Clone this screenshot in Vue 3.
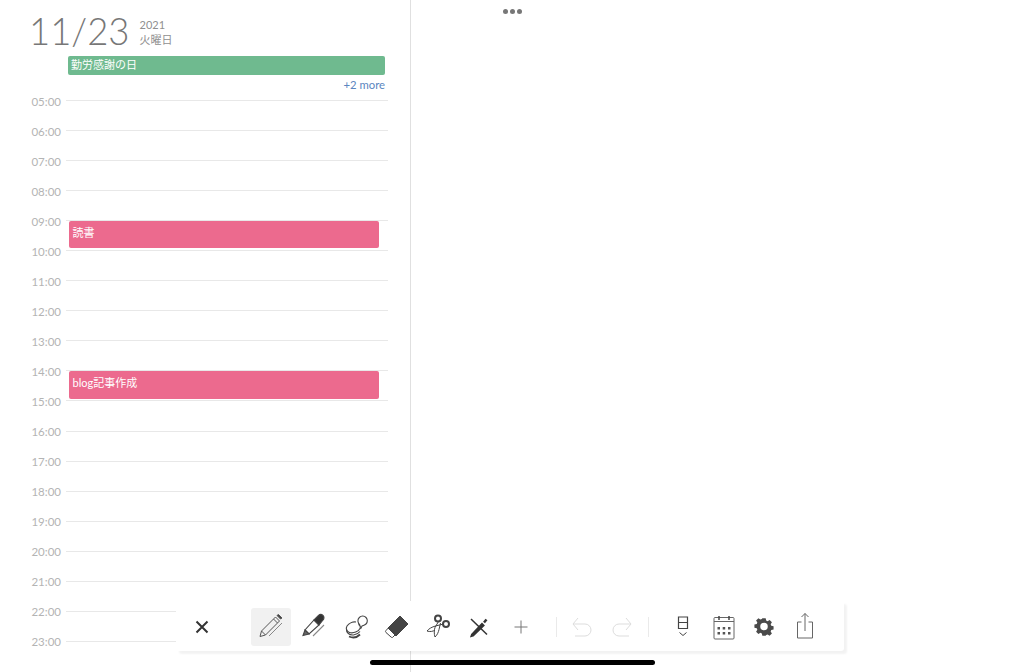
<template>
<div class="page">
  <section class="day-panel">
    <header class="day-head">
      <span class="day-date">11/23</span>
      <div class="day-meta">
        <span>2021</span>
        <span>火曜日</span>
      </div>
    </header>
    <div class="holiday">勤労感謝の日</div>
    <a class="more">+2 more</a>
    <div class="timeline">
      <div v-for="hour in hours" :key="hour" class="hour-row">
        <span class="hour-label">{{ hour }}</span>
        <span class="hour-line"></span>
      </div>
      <div
        v-for="ev in events"
        :key="ev.title"
        class="event"
        :style="{ top: ev.top + 'px', height: ev.height + 'px' }"
      >{{ ev.title }}</div>
    </div>
  </section>

  <div class="dots"><i></i><i></i><i></i></div>

  <div class="toolbar">
    <button class="tool close">
      <svg width="24" height="24" viewBox="0 0 24 24"><path d="M6.500 6.500l11 11M17.500 6.500l-11 11" stroke="#333" stroke-width="2" fill="none"/></svg>
    </button>
    <div class="tool-group pens">
      <button class="tool active">
        <svg width="30" height="30" viewBox="0 0 30 30" fill="none" stroke="#555" stroke-width="1"><path d="M4 24.500l1.500-5.500L19.500 5l4 4L9.500 23z"/><path d="M5.500 19l4 4M17.500 7l4 4"/><path d="M21 3.500l3.500 3.500 1.500-1-3.500-3.500z" fill="#444"/><path d="M13 24L26 11" stroke="#888"/></svg>
      </button>
      <button class="tool">
        <svg width="30" height="30" viewBox="0 0 30 30" fill="none" stroke="#444" stroke-width="1.100"><g transform="translate(1 0)"><path d="M15 8l5 5-10 9-4-4z"/><path d="M15 8l4.500-4.500c1.300-1.300 3.200-1.200 4.500 0s1.300 3.200 0 4.500L20 13z" fill="#333"/><path d="M6 18l-2 5.500L10 22z" fill="#666"/><path d="M14 24L25 13" stroke="#888"/></g></svg>
      </button>
      <button class="tool">
        <svg width="30" height="30" viewBox="0 0 30 30" fill="none" stroke="#444" stroke-width="1.100"><g transform="translate(3 0)"><path d="M18 13c-2.500-2-2.800-5.500-.7-7.500 2-2 5-1.800 6.700 0s1.800 4.800 0 6.500c-1.500 1.400-3 1.300-4 2l-1.500 3"/><path d="M14 10c-3-.5-7 1-9 4-1.500 2.500-.5 5.500 2.500 6.500 4 1.300 9-1 10.500-4 1-2-.5-3.500-1.500-4"/><path d="M4.500 17c-.5 3.500 3 6.500 7 6 2.500-.3 5-1.500 6.500-3.500"/><path d="M7 24.500c3.500 1.500 8 1 11-2" stroke-width="1.800"/></g></svg>
      </button>
      <button class="tool">
        <svg width="30" height="30" viewBox="0 0 30 30" fill="none" stroke="#444" stroke-width="1"><g transform="translate(1 0)"><path d="M18 4l8 8-12 12-8-8z" fill="#444"/><path d="M9 13l-5 5.500c-.7.800-.7 1.500 0 2l5 4.500c.8.700 1.500.7 2 0l4-4"/></g></svg>
      </button>
      <button class="tool">
        <svg width="30" height="30" viewBox="0 0 30 30" fill="none" stroke="#444" stroke-width="1"><circle cx="15" cy="6.500" r="3" stroke-width="2"/><circle cx="23" cy="12" r="3" stroke-width="2"/><path d="M15.500 9.500L12 15.500c-1 2.500-1 6.500 0 9.500 2-1.500 3.500-5 4-7.500L17.500 11"/><path d="M20.500 12l-8 2C9 15 6 16.500 4 19c3 1 6 .5 8-1"/></svg>
      </button>
      <button class="tool">
        <svg width="30" height="30" viewBox="0 0 30 30" fill="none" stroke="#333" stroke-width="1.500"><path d="M7 7l16 15.500"/><path d="M9 23.500l-1.500.5.500-1.500L18 12l1.500 1.500z" fill="#333" stroke-width="2"/><path d="M20 10.500l2.500-3" stroke-width="2.500"/></svg>
      </button>
      <button class="tool">
        <svg width="24" height="24" viewBox="0 0 24 24"><path d="M12 5.500v13M5.500 12h13" stroke="#777" stroke-width="1" fill="none"/></svg>
      </button>
    </div>
    <span class="sep first"></span>
    <button class="tool narrow">
      <svg width="24" height="24" viewBox="0 0 24 24" fill="none" stroke="#ddd" stroke-width="1"><path d="M7 3L2 9l5 6M2 9h12a6 6 0 0 1 0 12H4"/></svg>
    </button>
    <button class="tool narrow">
      <svg width="24" height="24" viewBox="0 0 24 24" fill="none" stroke="#ddd" stroke-width="1"><path d="M17 3l5 6-5 6M22 9H10a6 6 0 0 0 0 12h10"/></svg>
    </button>
    <span class="sep second"></span>
    <div class="tool-group right">
      <button class="tool">
        <svg width="24" height="30" viewBox="0 0 24 30" fill="none" stroke="#444" stroke-width="1.200"><path d="M7.500 5h9v11.500h-9zM7.500 10.500h9"/><path d="M8.500 20.500l3.500 3 3.500-3" stroke-width="1"/></svg>
      </button>
      <button class="tool">
        <svg width="26" height="30" viewBox="0 0 26 30" fill="none" stroke="#666" stroke-width="1"><rect x="3" y="5.500" width="20" height="21.500" rx="1"/><path d="M3 9.500h20" /><path d="M8 4v4M18 4v4" stroke="#444" stroke-width="1.500"/><g fill="#555" stroke="none"><rect x="6.500" y="15" width="2.500" height="2.500"/><rect x="11.700" y="15" width="2.500" height="2.500"/><rect x="17" y="15" width="2.500" height="2.500"/><rect x="6.500" y="20" width="2.500" height="2.500"/><rect x="11.700" y="20" width="2.500" height="2.500"/><rect x="17" y="20" width="2.500" height="2.500"/></g></svg>
      </button>
      <button class="tool">
        <svg width="20" height="20" viewBox="0 0 24 24"><path fill="#4a4a4a" fill-rule="evenodd" d="M10 2h4l.6 2.800 1.700.7L18.700 4l2.800 2.800-1.500 2.400.7 1.700 2.800.6v4l-2.800.6-.7 1.700 1.500 2.400-2.800 2.800-2.400-1.500-1.700.7L14 23h-4l-.6-2.800-1.700-.7L5.300 21l-2.800-2.800L4 15.800l-.7-1.700L.5 13.500v-4l2.800-.6.700-1.700L2.500 4.800 5.300 2l2.400 1.500 1.700-.7zM12 7.500a4.500 4.500 0 1 0 0 9 4.500 4.500 0 0 0 0-9z" transform="translate(0 -.5)"/></svg>
      </button>
      <button class="tool">
        <svg width="26" height="30" viewBox="0 0 26 30" fill="none" stroke="#666" stroke-width="1"><path d="M9.500 10H5.500v16h15V10h-4"/><path d="M13 19V1.500M9.500 5L13 1.500 16.500 5"/></svg>
      </button>
    </div>
  </div>

  <div class="home-bar"></div>
</div>
</template>

<script setup>
const hours = []
for (let h = 5; h <= 23; h++) {
  hours.push(String(h).padStart(2, '0') + ':00')
}

// top is measured from the 05:00 line
const events = [
  { title: '読書', top: 121, height: 27 },
  { title: 'blog記事作成', top: 271, height: 28 },
]
</script>

<style>
html, body {
  margin: 0;
  background: #fff;
}
</style>

<style scoped>
.page {
  position: relative;
  width: 1024px;
  height: 672px;
  overflow: hidden;
  background: #fff;
  font-family: Lato, "Noto Sans CJK JP", sans-serif;
}

.day-panel {
  width: 411px;
  height: 672px;
  box-sizing: border-box;
  border-right: 1px solid #e0e0e0;
}

.day-head {
  display: flex;
  align-items: flex-start;
  height: 56px;
  padding-left: 29px;
  box-sizing: border-box;
}

.day-date {
  margin-top: 8px;
  color: #777;
  font-size: 36.500px;
  font-weight: 300;
  line-height: 46px;
}

.day-meta {
  display: flex;
  flex-direction: column;
  margin: 17px 0 0 10px;
  color: #909090;
  font-size: 11px;
  line-height: 15px;
}

.holiday {
  width: 317px;
  height: 19px;
  margin-left: 68px;
  padding-left: 3px;
  box-sizing: border-box;
  border-radius: 2px;
  background: #6fba8f;
  color: #fff;
  font-size: 11px;
  line-height: 18px;
}

.more {
  display: block;
  width: 385px;
  height: 25px;
  color: #5b86c0;
  font-size: 11.300px;
  line-height: 20px;
  text-align: right;
}

.timeline {
  position: relative;
}

.hour-row {
  display: flex;
  align-items: flex-start;
  height: 30.060px;
}

.hour-label {
  width: 66px;
  padding-right: 5px;
  box-sizing: border-box;
  margin-top: -5.500px;
  color: #b4b4b4;
  font-size: 11.500px;
  line-height: 14px;
  text-align: right;
}

.hour-line {
  width: 322px;
  height: 1px;
  background: #e8e8e8;
}

.event {
  position: absolute;
  left: 68.500px;
  width: 310.500px;
  padding: 5px 0 0 4px;
  box-sizing: border-box;
  border-radius: 2px;
  background: #ec6a8e;
  color: #fff;
  font-size: 11px;
  line-height: 14px;
}

.dots {
  position: absolute;
  top: 8.500px;
  left: 503px;
  display: flex;
  gap: 2px;
}

.dots i {
  width: 5px;
  height: 5px;
  border-radius: 50%;
  background: #777;
}

.toolbar {
  position: absolute;
  top: 601px;
  left: 176px;
  display: flex;
  align-items: center;
  width: 668px;
  height: 50px;
  box-sizing: border-box;
  padding-left: 6px;
  border-radius: 3px;
  background: #fff;
  box-shadow: 3px 3px 2px rgba(0, 0, 0, 0.05);
}

.tool {
  display: flex;
  flex: none;
  align-items: center;
  justify-content: center;
  width: 40px;
  height: 38px;
  margin-top: 2px;
  padding: 0;
  border: 0;
  border-radius: 3px;
  background: none;
}

.tool.active {
  background: #f1f1f1;
}

.tool.narrow {
  width: 38px;
}

.tool-group {
  display: flex;
}

.tool-group.pens {
  gap: 1.670px;
  margin-left: 29px;
}

.tool-group.right {
  gap: 0.670px;
  margin-left: 7px;
}

.sep {
  flex: none;
  width: 1px;
  height: 20px;
  margin-top: 2px;
  background: #eaeaea;
}

.sep.first {
  margin-left: 15px;
  margin-right: 7px;
}

.sep.second {
  margin-left: 8px;
  margin-right: 7px;
}

.home-bar {
  position: absolute;
  top: 660px;
  left: 370px;
  width: 285px;
  height: 5px;
  border-radius: 3px;
  background: #000;
}
</style>
